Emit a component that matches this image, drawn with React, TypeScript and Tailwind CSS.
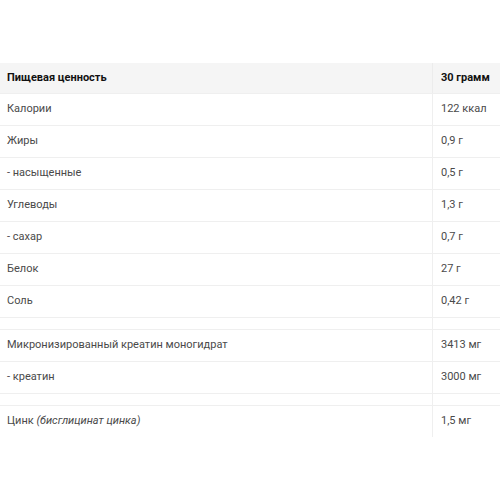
import React from "react";

type Row = { k: React.ReactNode; v?: string; spacer?: boolean };

const rows: Row[] = [
  { k: "Калории", v: "122 ккал" },
  { k: "Жиры", v: "0,9 г" },
  { k: "- насыщенные", v: "0,5 г" },
  { k: "Углеводы", v: "1,3 г" },
  { k: "- сахар", v: "0,7 г" },
  { k: "Белок", v: "27 г" },
  { k: "Соль", v: "0,42 г" },
  { k: "", spacer: true },
  { k: "Микронизированный креатин моногидрат", v: "3413 мг" },
  { k: "- креатин", v: "3000 мг" },
  { k: "", spacer: true },
  {
    k: (
      <span>
        Цинк <i>(бисглицинат цинка)</i>
      </span>
    ),
    v: "1,5 мг",
  },
];

export default function App() {
  return (
    <div
      className="w-[500px] h-[500px] bg-white pt-[63px]"
      style={{ fontFamily: "Roboto, 'Noto Sans', sans-serif" }}
    >
      <div className="flex flex-col">
        <div className="flex h-[30px] bg-[#f5f5f5] items-center text-[11px] font-bold text-[#111]">
          <div className="w-[432px] pl-[7px]">Пищевая ценность</div>
          <div className="flex-1 pl-[8px] self-stretch flex items-center border-l border-[#ececec]">30 грамм</div>
        </div>
        {rows.map((r, i) =>
          r.spacer ? (
            <div key={i} className="flex h-[12px] border-t border-[#efefef]">
              <div className="w-[432px]" />
              <div className="flex-1 border-l border-[#efefef]" />
            </div>
          ) : (
            <div key={i} className="flex h-[32px] border-t border-[#efefef] text-[11px] text-[#4a4a4a]">
              <div className="w-[432px] pl-[7px] flex items-center">{r.k}</div>
              <div className="flex-1 pl-[8px] flex items-center border-l border-[#efefef]">{r.v}</div>
            </div>
          )
        )}
      </div>
    </div>
  );
}
